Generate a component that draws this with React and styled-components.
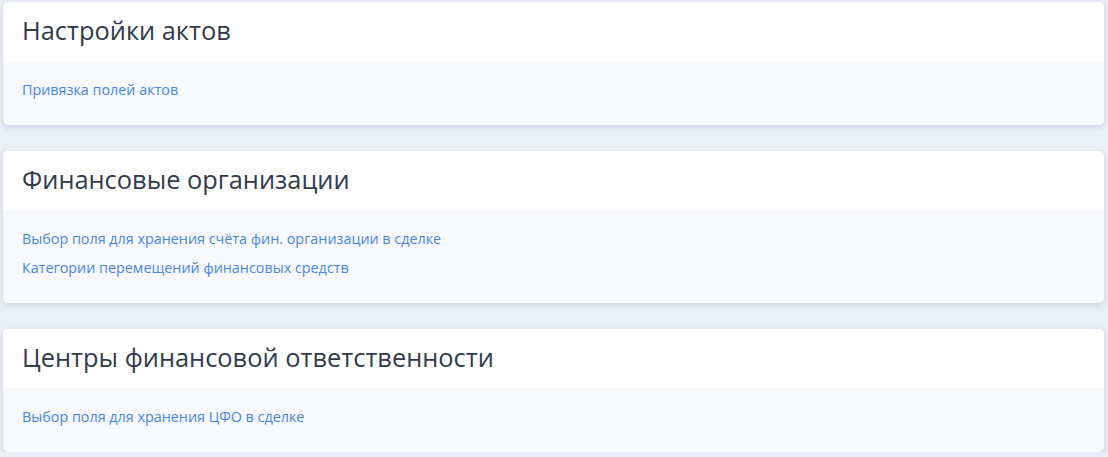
import styled, { createGlobalStyle } from "styled-components";

const sections = [
  {
    title: "Настройки актов",
    links: ["Привязка полей актов"],
  },
  {
    title: "Финансовые организации",
    links: [
      "Выбор поля для хранения счёта фин. организации в сделке",
      "Категории перемещений финансовых средств",
    ],
  },
  {
    title: "Центры финансовой ответственности",
    links: ["Выбор поля для хранения ЦФО в сделке"],
  },
];

function App() {
  return (
    <>
      <GlobalStyle />
      <Page>
        {sections.map((s) => (
          <Card key={s.title}>
            <CardHeader>
              <Title>{s.title}</Title>
            </CardHeader>
            <CardBody>
              {s.links.map((l) => (
                <Link key={l} href="#">
                  {l}
                </Link>
              ))}
            </CardBody>
          </Card>
        ))}
      </Page>
    </>
  );
}

const GlobalStyle = createGlobalStyle`
  body {
    margin: 0;
    background: #eaeef6;
    font-family: "Open Sans", "Noto Sans", sans-serif;
  }
`;

const Page = styled.div`
  display: flex;
  flex-direction: column;
  gap: 26px;
  padding: 2px 4px 0 3px;
`;

const Card = styled.div`
  border-radius: 5px;
  overflow: hidden;
  background: #f8f9fd;
  box-shadow: 0 2px 6px rgba(40, 60, 100, 0.15);
`;

const CardHeader = styled.div`
  background: #ffffff;
  height: 59px;
  box-sizing: border-box;
  display: flex;
  align-items: center;
  padding: 0 19px 3px;
`;

const Title = styled.h2`
  margin: 0;
  font-size: 25.4px;
  font-weight: 400;
  color: #323b4b;
  line-height: 34px;
`;

const CardBody = styled.div`
  display: flex;
  flex-direction: column;
  align-items: flex-start;
  gap: 9px;
  padding: 19px 19px 25px;
`;

const Link = styled.a`
  font-size: 14.35px;
  line-height: 20px;
  color: #4787e4;
  text-decoration: none;
`;

export default App;
